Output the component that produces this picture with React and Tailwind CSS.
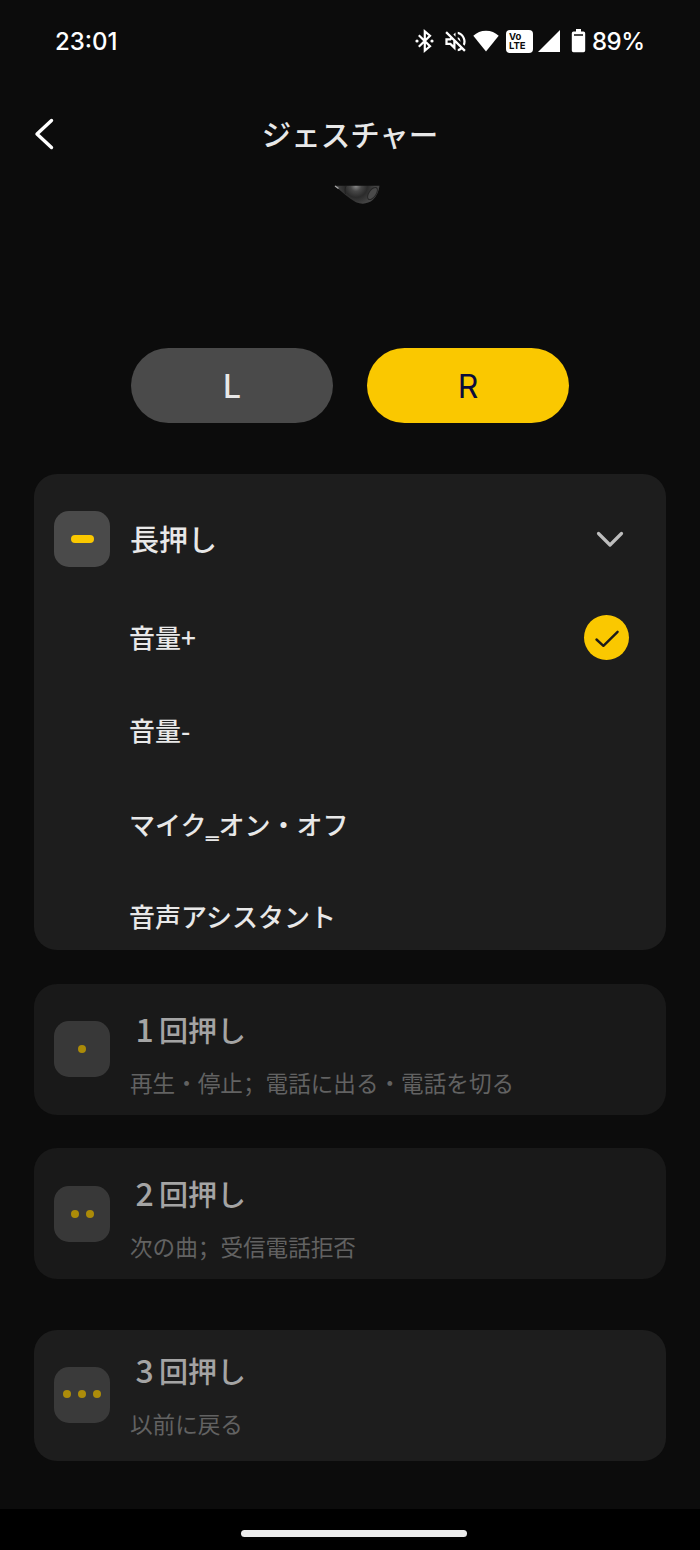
import { MdOutlineVolumeOff } from "react-icons/md";

function StatusIcons() {
  return (
    <div className="flex h-6 items-center">
      <svg className="h-6 w-[19px] shrink-0" viewBox="0 0 19 24" fill="none" stroke="#fff" strokeWidth="2.200">
        <path d="M3.8 6.2 15 17.3l-5.200 4.300V2.400L15 6.700 3.800 17.800" />
        <circle cx="2" cy="12" r="1.600" fill="#fff" stroke="none" />
        <circle cx="17" cy="12" r="1.600" fill="#fff" stroke="none" />
      </svg>
      <MdOutlineVolumeOff className="ml-[8px] size-[27px] shrink-0" />
      <svg className="ml-[4px] h-6 w-[26px] shrink-0" viewBox="0 0 26 24" fill="#fff">
        <path d="M.3 6.8C3.700 3.500 8 1.700 13 1.700s9.300 1.800 12.700 5.100L13 22.500z" />
      </svg>
      <div className="ml-[7px] flex h-[23px] w-[27px] shrink-0 flex-col justify-center rounded-[4px] bg-white pl-[3px] font-['Inter',sans-serif] text-[9.500px] leading-[9.500px] font-bold text-[#0c0c0c]">
        <span>Vo</span>
        <span>LTE</span>
      </div>
      <svg className="ml-[5px] h-6 w-[22px] shrink-0" viewBox="0 0 22 24" fill="#fff">
        <path d="M0 23 22 1v22z" />
      </svg>
      <svg className="ml-[11px] h-6 w-[15px] shrink-0" viewBox="0 0 15 24" fill="#fff">
        <path d="M5 0h5v2.500h2.500A1.700 1.700 0 0 1 14.200 4.200v17.300a1.700 1.700 0 0 1-1.700 1.700h-10A1.700 1.700 0 0 1 .8 21.500V4.200a1.700 1.700 0 0 1 1.700-1.700H5z" />
        <path d="M3 6h9" stroke="#0c0c0c" strokeWidth="1.500" />
      </svg>
    </div>
  );
}

function Tile({ dots }) {
  return (
    <div className={`flex size-14 shrink-0 items-center justify-center gap-[7px] rounded-[15px] bg-[#4a4a4a] ${dots === 3 ? "pb-[3px]" : ""}`}>
      {dots === 0 ? (
        <div className="h-2 w-[23px] rounded-full bg-[#fac800]" />
      ) : (
        Array.from({ length: dots }, (_, i) => <div key={i} className="size-2 rounded-full bg-[#fac800]" />)
      )}
    </div>
  );
}

function Option({ label, selected, className }) {
  return (
    <div className={`flex h-[46px] items-center justify-between pr-[37px] pl-24 text-[26px] leading-[46px] font-medium text-[#e8e8e8] ${className}`}>
      <span className="-ml-px">{label}</span>
      {selected && (
        <div className="flex size-[45px] items-center justify-center rounded-full bg-[#fac800]">
          <svg className="size-[45px]" viewBox="0 0 45 45" fill="none" stroke="#1b1b1b" strokeWidth="2.400" strokeLinecap="round" strokeLinejoin="round">
            <path d="m12.500 24.500 6.900 6.300 14.200-14" />
          </svg>
        </div>
      )}
    </div>
  );
}

function Semicolon() {
  return <span className="font-['Noto_Sans_CJK_SC',sans-serif]" lang="zh-CN">；</span>;
}

function GestureCard({ dots, count, subtitle, className, tileClass, textClass }) {
  return (
    <section className={`flex h-[131px] shrink-0 items-start rounded-[23px] px-5 ${className}`}>
      <div className={`opacity-65 ${tileClass}`}>
        <Tile dots={dots} />
      </div>
      <div className={`ml-5 flex flex-col whitespace-nowrap ${textClass}`}>
        <h2 className="flex h-10 items-baseline text-[29px] leading-[40px] font-medium text-[#a4a4a4]">
          <span className="w-[29px] text-center text-[32px] leading-[40px]">{count}</span>
          <span>回押し</span>
        </h2>
        <p className="mt-[18px] text-[22.600px] leading-[34px] text-[#626262]">{subtitle}</p>
      </div>
    </section>
  );
}

export default function App() {
  return (
    <div className="flex h-[1550px] w-[700px] flex-col overflow-hidden bg-[#0c0c0c] font-['Noto_Sans_CJK_JP',sans-serif] text-white">
      <div className="flex h-[82px] shrink-0 items-center justify-between pr-[56px] pl-[55px]">
        <span className="pt-[2px] font-['Inter',sans-serif] text-[24px] font-medium">23:01</span>
        <div className="flex items-center">
          <StatusIcons />
          <span className="ml-[6px] w-[52px] pt-[2px] font-['Inter',sans-serif] text-[24px] font-medium tracking-[-0.500px]">89%</span>
        </div>
      </div>

      <header className="grid h-[103px] shrink-0 grid-cols-[1fr_auto_1fr] items-center">
        <svg className="ml-[33px] h-8 w-[21px]" viewBox="0 0 21 32" fill="none" stroke="#fff" strokeWidth="3.400" strokeLinecap="round" strokeLinejoin="round">
          <path d="M18.500 2.500 4 16l14.500 13.500" />
        </svg>
        <h1 className="pb-[2px] text-[29.500px] leading-10 font-medium text-[#e8e8e8]">ジェスチャー</h1>
      </header>

      <svg className="ml-[334px] h-5 w-[46px] shrink-0" viewBox="0 0 46 20">
        <defs>
          <radialGradient id="bud" cx="22" cy="1" r="19" gradientUnits="userSpaceOnUse">
            <stop offset="0" stopColor="#888" />
            <stop offset=".28" stopColor="#484848" />
            <stop offset=".6" stopColor="#2b2b2b" />
            <stop offset="1" stopColor="#444" />
          </radialGradient>
        </defs>
        <path d="M.5.800h45c-.5 5-2.600 10.500-6.500 14-4.500 4-11 5-17 2.400C14.500 13.500 8 6.500.5.800" fill="url(#bud)" />
        <path d="M12 1c-1 2.500-1.200 5-.5 8" fill="none" stroke="#222" />
        <ellipse cx="38.500" cy="8.500" rx="3.500" ry="7" transform="rotate(35 38.500 8.500)" fill="#4a4a4a" stroke="#262626" />
        <path d="m1 1 3.500 2.500" stroke="#aaa" strokeWidth="1.200" />
      </svg>

      <div className="mt-[143px] flex shrink-0 justify-center gap-[34px] font-['Inter',sans-serif] text-[32px]">
        <button className="h-[75px] w-[202px] rounded-full bg-[#4a4a4a] pt-[2px] font-medium text-[#e8e8e8]">L</button>
        <button className="h-[75px] w-[202px] rounded-full bg-[#fac800] pt-[2px] text-[#0b0b3c]">R</button>
      </div>

      <main className="flex flex-col px-[34px] pt-[51px]">
        <section className="flex h-[476px] shrink-0 flex-col rounded-[23px] bg-[#1d1d1d]">
          <div className="mt-[37px] flex h-14 shrink-0 items-center pr-[42px] pl-5">
            <Tile dots={0} />
            <h2 className="ml-5 grow pb-[2px] text-[29px] leading-10 font-medium text-[#e8e8e8]">長押し</h2>
            <svg className="h-[17px] w-7" viewBox="0 0 28 17" fill="none" stroke="#bdbdbd" strokeWidth="3.200" strokeLinecap="round" strokeLinejoin="round">
              <path d="m2.500 2.500 11.500 11.500L25.500 2.500" />
            </svg>
          </div>
          <Option label="音量+" selected className="mt-[47px]" />
          <Option label="音量-" className="mt-[47px]" />
          <Option
            label={<>マイク<span className="inline-block w-[12px] origin-left scale-x-[0.87]">‗</span>オン・オフ</>}
            className="mt-[48px]"
          />
          <Option label="音声アシスタント" className="mt-[46px]" />
        </section>

        <GestureCard dots={1} count="1" subtitle={<>再生・停止<Semicolon />電話に出る・電話を切る</>} className="mt-[34px] bg-[#191919]" tileClass="mt-[37px]" textClass="mt-[24px]" />
        <GestureCard dots={2} count="2" subtitle={<>次の曲<Semicolon />受信電話拒否</>} className="mt-[33px] bg-[#191919]" tileClass="mt-[38px]" textClass="mt-[24px]" />
        <GestureCard dots={3} count="3" subtitle="以前に戻る" className="mt-[51px] bg-[#1d1d1d]" tileClass="mt-[37px]" textClass="mt-[19px]" />
      </main>

      <footer className="mt-auto flex h-[41px] shrink-0 items-center bg-black pt-[7px] pl-[241px]">
        <div className="h-[7px] w-[226px] rounded-full bg-[#ececec]" />
      </footer>
    </div>
  );
}
